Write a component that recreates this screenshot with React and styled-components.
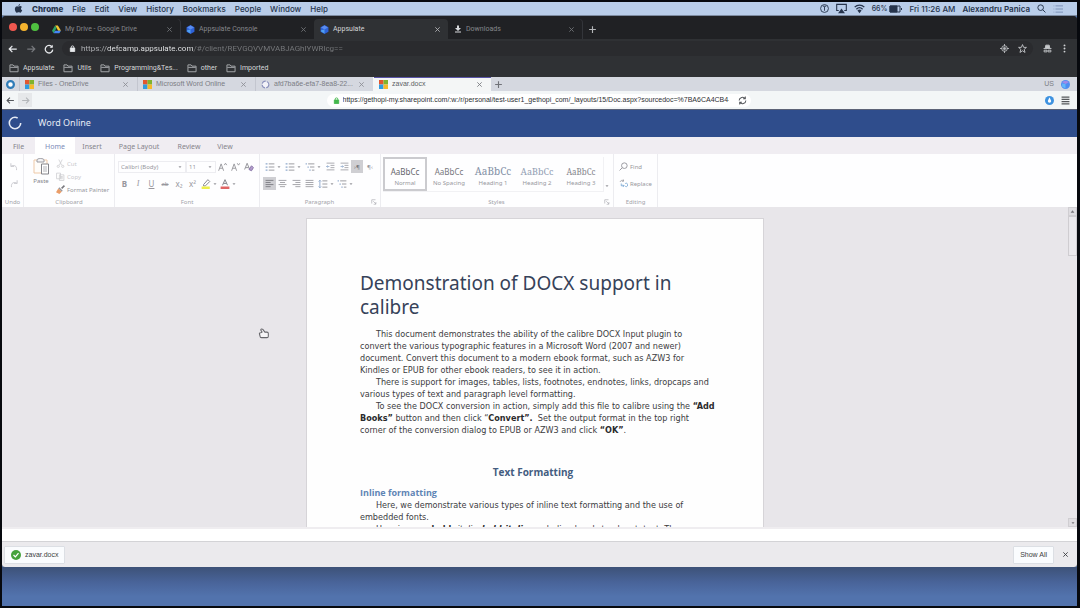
import React from "react";
import styled, { createGlobalStyle, css } from "styled-components";

const ui = `Inter, "Liberation Sans", sans-serif`;
const chrome = `Roboto, "Liberation Sans", sans-serif`;
const arial = `"Liberation Sans", Arial, sans-serif`;
const humanist = `"Noto Sans", "Open Sans", sans-serif`;
const heading = `"Open Sans", "Noto Sans", sans-serif`;
const body = `"DejaVu Sans Condensed", "Open Sans", sans-serif`;

const Global = createGlobalStyle`
  *, *::before, *::after { box-sizing: border-box; }
  body { margin: 0; background: #05070b; font-family: ${ui}; }
  button, input, select { font: inherit; color: inherit; border: 0; padding: 0; margin: 0; background: none; }
  button { display: inline-flex; align-items: center; white-space: nowrap; }
  a { color: inherit; text-decoration: none; }
  h1, h2, h3, p { margin: 0; font-weight: inherit; }
  svg { display: block; flex: none; }
`;

const Screen = styled.div`
  min-height: 100vh;
  display: flex;
  flex-direction: column;
  border: solid #07090e;
  border-width: 2px 3px 2px 2px;
  background: #5273ac;
`;

const Spacer = styled.div`flex: 1;`;

/* ---------- system menu bar ---------- */
const MenuBar = styled.header`
  height: 14px;
  display: flex;
  align-items: center;
  padding: 0 14px 0 12px;
  background: #b9cde9;
  border-bottom: 1px solid #7d8ba0;
  color: #26344c;
  font-size: 8px;
  line-height: 12px;
`;
const MenuItems = styled.nav`
  display: flex;
  align-items: center;
  gap: 9px;
`;
const MenuItem = styled.button`font-weight: ${(p) => (p.$strong ? 800 : 500)};`;
const StatusItems = styled.div`
  display: flex;
  align-items: center;
  gap: 7px;
  white-space: nowrap;
  font-weight: 500;
  b { font-weight: 600; }
`;
const Battery = styled.span`
  display: flex;
  align-items: center;
  gap: 2px;
  font-size: 7px;
`;

/* ---------- outer browser ---------- */
const Window = styled.div`
  flex: 1;
  display: flex;
  flex-direction: column;
  min-height: 0;
  background: #2f3134;
  border-radius: 4px 4px 3px 3px;
  overflow: hidden;
`;
const DarkTabs = styled.div`
  height: 23px;
  display: flex;
  align-items: flex-end;
  background: #202124;
  padding-left: 7px;
`;
const Lights = styled.div`
  display: flex;
  gap: 3px;
  align-self: center;
  padding-bottom: 2px;
  width: 37px;
`;
const Light = styled.button`
  width: 8px;
  height: 8px;
  border-radius: 50%;
  background: ${(p) => p.$color};
`;
const DarkTab = styled.div`
  width: 134px;
  height: 20px;
  display: flex;
  align-items: center;
  padding: 0 7px 0 6px;
  border-radius: 4px 4px 0 0;
  color: #85878b;
  font: 7px/10px ${chrome};
  ${(p) => p.$active && css`background: #2f3134; color: #d4d5d8;`}
  ${(p) => p.$divider && css`box-shadow: 1px 0 0 #33353a;`}
`;
const TabLabel = styled.button`
  flex: 1;
  gap: 4px;
  min-width: 0;
  overflow: hidden;
`;
const Close = styled.button`
  width: 7px;
  height: 9px;
  justify-content: center;
  opacity: 0.8;
`;
const NewTab = styled.button`
  height: 20px;
  margin-left: ${(p) => p.$gap}px;
  color: ${(p) => p.$color};
`;
const DarkBar = styled.div`
  height: 19px;
  display: flex;
  align-items: center;
  padding: 0 8px 0 6px;
  gap: 8px;
  color: #e8eaed;
`;
const DarkNav = styled.button`color: ${(p) => (p.$off ? "#77797d" : "#e8eaed")};`;
const DarkAddress = styled.label`
  flex: 1;
  height: 15px;
  display: flex;
  align-items: center;
  gap: 5px;
  padding: 0 6px 0 7px;
  margin-right: 2px;
  border-radius: 8px;
  background: #2a2b2e;
`;
const AddressActions = styled.span`
  display: flex;
  gap: 9px;
`;
const DarkUrl = styled.input`
  flex: 1;
  min-width: 0;
  height: 13px;
  font: 8px/12px ${chrome};
  color: transparent;
  background: linear-gradient(90deg, #b4b6b9 26px, #eceef0 26px, #eceef0 113px, #77797c 113px);
  background-clip: text;
  -webkit-background-clip: text;
`;
const Bookmarks = styled.nav`
  height: 19px;
  display: flex;
  align-items: center;
  gap: 9px;
  padding: 0 7px;
  color: #d6d8da;
  font: 7px/10px ${chrome};
  a { display: flex; align-items: center; gap: 4px; }
`;

/* ---------- inner browser ---------- */
const LightTabs = styled.div`
  height: 14px;
  display: flex;
  align-items: stretch;
  background: #d5d8e0;
  color: #7b7d84;
  font: 7px/12px ${arial};
  ${NewTab} { height: 14px; }
`;
const Home = styled.button`
  width: 17px;
  justify-content: center;
`;
const LightTab = styled.div`
  width: 118px;
  display: flex;
  align-items: center;
  padding: 0 8px 0 5px;
  border-left: 1px solid #c3c6cf;
  ${(p) => p.$active && css`background: #f4f6f6; border-color: #f4f6f6; box-shadow: inset 0 1px #5a55a8; color: #5c5e64;`}
`;
const Region = styled.div`
  display: flex;
  align-items: center;
  gap: 7px;
  padding-right: 7px;
`;
const LightBar = styled.div`
  height: 18px;
  display: flex;
  align-items: center;
  padding-right: 1px;
  background: #f3f6f7;
  color: #55585c;
`;
const NavButton = styled.button`
  width: ${(p) => (p.$wide ? 14 : 16)}px;
  height: 14px;
  justify-content: center;
  ${(p) => p.$off && css`background: #e6e8ea; color: #b4b7ba;`}
`;
const LightAddress = styled.label`
  width: 424px;
  height: 13px;
  display: flex;
  align-items: center;
  gap: 3px;
  padding: 0 4px 0 6px;
  border-radius: 7px;
  background: #fff;
`;
const LightUrl = styled.input`
  width: 386px;
  height: 12px;
  font: 7px/12px ${arial};
  color: #2d2f33;
`;

/* ---------- word ---------- */
const WordHeader = styled.div`
  height: 28px;
  display: flex;
  align-items: center;
  gap: 16px;
  padding: 0 6px 1px;
  border-top: 1px solid #5c6377;
  background: #2f4d8c;
  color: #e6ebf5;
  font: 9px/12px ${humanist};
`;
const RibbonTabs = styled.nav`
  height: 17px;
  display: flex;
  background: #f0edf2;
  color: #85838b;
  font: 7px/17px ${humanist};
`;
const RibbonTab = styled.button`
  width: ${(p) => p.$w}px;
  justify-content: center;
  padding-top: 1px;
  ${(p) => p.$active && css`background: #fff; color: #7c8cb8;`}
`;
const Ribbon = styled.div`
  height: 53px;
  display: flex;
  background: #fefeff;
  color: #97979d;
  font: 6px/8px ${humanist};
`;
const Group = styled.section`
  width: ${(p) => p.$w}px;
  display: flex;
  flex-direction: column;
  border-right: 1px solid #ececf0;
  padding: 3px 0 1px;
`;
const GroupBody = styled.div`
  flex: 1;
  display: flex;
  flex-direction: ${(p) => (p.$col ? "column" : "row")};
  gap: ${(p) => p.$gap || 0}px;
  padding: ${(p) => p.$pad || "0"};
`;
const GroupName = styled.div`
  display: flex;
  justify-content: center;
  color: #a3a3a9;
  span { flex: 1; text-align: center; }
  svg { margin: 1px 3px 0 -8px; }
`;
const Stack = styled.div`
  display: flex;
  flex-direction: column;
`;
const Row = styled.div`
  display: flex;
  align-items: center;
  height: 13px;
`;
const Tool = styled.button`
  height: 13px;
  gap: 2px;
  justify-content: center;
  ${(p) => p.$w && css`width: ${p.$w}px;`}
  ${(p) => p.$on && css`background: #cfcfd3; color: #77777d;`}
  ${(p) => p.$off && css`color: #c9c9ce;`}
`;
const Letter = styled(Tool)`
  font-size: 8px;
  font-family: ${(p) => (p.$serif ? `"Liberation Serif", serif` : humanist)};
`;
const LabelTool = styled(Tool)`justify-content: flex-start;`;
const Paste = styled.button`
  width: 26px;
  flex-direction: column;
  gap: 1px;
  align-self: flex-start;
  color: #85858b;
`;
const Picker = styled.label`
  width: ${(p) => p.$w}px;
  height: 12px;
  display: flex;
  align-items: center;
  border: 1px solid #ededf1;
  padding: 0 3px 0 2px;
  select { flex: 1; min-width: 0; appearance: none; font-size: 6px; line-height: 10px; }
`;
const Gallery = styled.div`
  flex: 1;
  display: flex;
  border: solid #f1f1f4;
  border-width: 0 1px 1px 0;
`;
const More = styled(Tool)`align-self: flex-end;`;
const StyleCard = styled.button`
  width: 44px;
  height: 34px;
  flex-direction: column;
  justify-content: center;
  overflow: hidden;
  gap: 1px;
  padding-top: 3px;
  border: 2px solid ${(p) => (p.$on ? "#cbcbcf" : "transparent")};
  span { font-size: 6px; line-height: 8px; color: #97979d; }
`;
const Sample = styled.em`
  font: normal ${(p) => p.$size}px/13px ${(p) => (p.$serif ? `"Noto Serif", "Liberation Serif", serif` : humanist)};
  color: ${(p) => p.$color};
`;

const Canvas = styled.main`
  flex: 1 1 0;
  min-height: 0;
  display: flex;
  background: #e8e6ea;
  border-bottom: 2px solid #efedf0;
  position: relative;
`;
const PageArea = styled.div`
  flex: 1;
  display: flex;
  justify-content: center;
  overflow: hidden;
  padding-top: 11px;
`;
const Page = styled.article`
  width: 458px;
  height: max-content;
  padding: 52px 53px 20px;
  border: 1px solid #d6d4d8;
  background: #fefefe;
  color: #3c3c3e;
  font: 9px/12px ${body};
  white-space: nowrap;
  p { text-indent: 16px; }
  p b { color: #2a2a2c; }
`;
const Title = styled.h1`
  color: #364259;
  font: 19px/24px ${humanist};
  margin-bottom: 9px;
`;
const Section = styled.h2`
  color: #435c80;
  font: 700 10px/12px ${heading};
  text-align: center;
  margin: 30px 46px 9px 42px;
`;
const SubSection = styled.h3`
  color: #5f85b5;
  font: 700 9px/12px ${heading};
`;
const Scrollbar = styled.div`
  width: 9px;
  display: flex;
  flex-direction: column;
  justify-content: space-between;
`;
const ScrollButton = styled.button`
  height: 9px;
  justify-content: center;
  background: #dfdde1;
  border: 1px solid #d0ced2;
  color: #77757a;
`;
const Thumb = styled.div`
  height: 40px;
  border: 1px solid #cfcdd1;
  background: #eae8ec;
  margin-bottom: auto;
`;
const Hand = styled.svg`
  position: absolute;
  left: 256px;
  top: 121px;
`;
const Status = styled.div`
  height: 12px;
  background: #fff;
`;
const Downloads = styled.footer`
  height: 26px;
  display: flex;
  align-items: center;
  padding: 0 1px 0 2px;
  border-top: 1px solid #d3d3d6;
  background: #ebeaed;
  color: #3a3c40;
  font: 7px/10px ${arial};
`;
const Chip = styled.button`
  height: 18px;
  gap: 4px;
  padding: 0 6px;
  border: 1px solid #dcdfe4;
  border-radius: 1px;
  background: #fafcfe;
  font: inherit;
`;
const Desktop = styled.div`
  height: 39px;
  background: linear-gradient(#3d5278, #49649a 40%, #5273ad 75%);
`;

/* ---------- icons ---------- */
const S = ({ w = 10, h = w, box = "0 0 16 16", sw = 1.6, children, ...rest }) => (
  <svg width={w} height={h} viewBox={box} fill="none" stroke="currentColor" strokeWidth={sw} aria-hidden="true" {...rest}>{children}</svg>
);
const X = ({ w = 7 }) => <S w={w} sw={2}><path d="M3 3l10 10M13 3L3 13" /></S>;
const Plus = () => <S w={9} sw={2}><path d="M8 2v12M2 8h12" /></S>;
const Arrow = ({ flip, w = 10 }) => <S w={w} sw={2}><path d={flip ? "M2 8h12M9 3l5 5-5 5" : "M14 8H2M7 3L2 8l5 5"} /></S>;
const Reload = ({ w = 10 }) => <S w={w} sw={2}><path d="M13 5a6 6 0 1 0 1 4" /><path d="M14 1v5H9z" fill="currentColor" stroke="none" /></S>;
const Sync = () => <S w={9} sw={1.8}><path d="M2 8a6 6 0 0 1 11-3M14 8a6 6 0 0 1-11 3M13 1v4H9M3 15v-4h4" /></S>;
const Lock = ({ color = "#e8eaed" }) => <S w={7} stroke={color} sw={2}><path d="M5 8V5a3 3 0 0 1 6 0v3" /><path d="M3 7h10v8H3z" fill={color} /></S>;
const Folder = () => <S w={10} stroke="#a9abae" sw={1.5}><path d="M1.500 3h5l1.500 2h6.500v9h-13zM2 7h12" /></S>;
const Apple = () => (
  <S w={9}><path fill="currentColor" stroke="none" d="M10.800 0c.1 1.700-1.200 3.400-2.900 3.500C7.700 1.900 9.200.2 10.800 0zM8 4.500c.8 0 1.700-.8 3.100-.8 1 0 2.200.5 3 1.600-2.500 1.500-2.100 5 .5 6-.6 1.700-2 4.200-3.500 4.200-1.100 0-1.500-.7-2.900-.7s-1.800.7-2.900.7C3.400 15.500 1.500 12 1.500 8.900c0-3.300 2-5.100 4-5.100 1.100 0 1.800.7 2.500.7z" /></S>
);
const Drive = () => (
  <S w={9} stroke="none"><path d="M5.500 1h5L16 10h-5z" fill="#f4c431" /><path d="M5.500 1L8 5.500 3 14.500 0 10z" fill="#2da567" /><path d="M5.500 10H16l-3 4.500H3z" fill="#4486f4" /></S>
);
const Cube = () => (
  <S w={9} stroke="none"><path d="M8 0l7 4v8l-7 4-7-4V4z" fill="#2e62d8" /><path d="M8 1l6 3.500L8 8 2 4.500z" fill="#5b8df0" /><path d="M8 8v7l-6-3.500v-2z" fill="#4fa0f0" /></S>
);
const CloudBadge = () => (
  <S w={9} stroke="none"><circle cx="8" cy="8" r="8" fill="#4f8df0" /><path d="M2 4a8 8 0 0 1 12 0L8 7z" fill="#a08ae8" /><path d="M8 7v8l-6-3V6z" fill="#63b6fa" /></S>
);
const Download = () => <S w={8} stroke="none"><path d="M6 1h4v5h4l-6 6-6-6h4zM2 13h12v2H2z" fill="#d7d9dc" /></S>;
const Microsoft = () => (
  <S w={9} stroke="none"><path d="M0 0h8v8H0z" fill="#e2572f" /><path d="M8 0h8v8H8z" fill="#7fb32d" /><path d="M0 8h8v8H0z" fill="#2f9be0" /><path d="M8 8h8v8H8z" fill="#f5b92a" /></S>
);
const Ring = ({ w = 8, color, inner }) => <S w={w} stroke={color} sw={4}><circle cx="8" cy="8" r="6" fill={inner || "none"} /></S>;
const Loader = () => <S w={9} stroke="#8d93bd" sw={2}><circle cx="8" cy="8" r="6" strokeDasharray="8 2" fill="#f2f2f8" /></S>;
const Caret = () => <S w={4} box="0 0 8 8" stroke="none"><path d="M1 2.500h6L4 6z" fill="currentColor" /></S>;
const Lines = ({ rows = [14, 14, 14, 14], align = "l" }) => (
  <S w={9} sw={1.500}>
    {rows.map((r, i) => {
      const x = align === "l" ? 1 : align === "r" ? 15 - r : 8 - r / 2;
      return <path key={i} d={`M${x} ${2.5 + i * 3.700}h${r}`} />;
    })}
  </S>
);
const List = ({ nested }) => (
  <S w={10} sw={1.500}>
    <path d={nested ? "M5 3h10M8 8h7M11 13h4" : "M6 3h9M6 8h9M6 13h9"} />
    <path stroke="#8fa9cc" strokeWidth="2" d={nested ? "M1 3h2M4 8h2M7 13h2" : "M1 3h3M1 8h3M1 13h3"} />
  </S>
);
const Indent = ({ out }) => (
  <S w={9} sw={1.400}><path d="M1 2h14M8 6h7M8 10h7M1 14h14" /><path stroke="#8fa9cc" d={out ? "M6 8H1M3 6L1 8l2 2" : "M1 8h5M4 6l2 2-2 2"} /></S>
);
const Spacing = () => <S w={10} sw={1.500}><path d="M7 3h8M7 8h8M7 13h8" /><path stroke="#8fa9cc" d="M3 2v12M1 4l2-2 2 2M1 12l2 2 2-2" /></S>;
const Launcher = () => <S w={6}><path d="M2 12V2h10M6 6l7 7M13 8v6H7" /></S>;
const Undo = ({ flip }) => (
  <S w={10} sw={1.500}><path d={flip ? "M13 2v5H8M13 7C8 4 3 6 4 13" : "M3 2v5h5M3 7c5-3 10-1 9 6"} /></S>
);
const Clipboard = () => (
  <svg width="17" height="19" viewBox="0 0 17 19" fill="none" aria-hidden="true">
    <path d="M1 3h13v13H1z" stroke="#eec9a8" fill="#fffdfa" /><path d="M4 3c0-2 7-2 7 0v2H4z" stroke="#9a9aa0" fill="#f3f3f5" />
    <path d="M8.500 7h7v10h-7z" stroke="#85858b" fill="#fff" /><path d="M10 10h4M10 12h4M10 14h4" stroke="#b5b5ba" />
  </svg>
);
const Scissors = () => <S w={9} sw={1.300}><path d="M5 1l5 10M11 1L6 11" /><circle cx="4" cy="13" r="2" /><circle cx="12" cy="13" r="2" /></S>;
const Copy = () => <S w={9} sw={1.300}><path d="M1 2h7v10H1zM6 5h8v10H6z" fill="#fff" /><path d="M8 8h4M8 10h4M8 12h4" /></S>;
const Brush = () => <S w={9} stroke="none"><path d="M9 5l5-5 2 2-5 5z" fill="#77777d" /><path d="M6 4l6 6-2 2-6-6z" fill="#98989e" /><path d="M4 6l6 6-4 4-6-3z" fill="#ea9d68" /></S>;
const Marker = () => <S w={10}><path d="M4 9l7-8 3 3-7 7H4z" stroke="#8a8a90" /><path d="M1 14h13" stroke="#eef04a" strokeWidth="4" /></S>;
const FontColor = () => <S w={10}><path d="M4 10L8 1l4 9M5.500 7h5" stroke="#85858b" /><path d="M1 14h14" stroke="#e06565" strokeWidth="4" /></S>;
const FontSize = ({ up }) => <S w={10} sw={1.500}><path d="M1 14L5 3l4 11M2.500 10h5" /><path d={up ? "M10 5l2-3 2 3" : "M10 2l2 3 2-3"} /></S>;
const Search = ({ w = 9, flip }) => <S w={w} sw={1.700}><g transform={flip ? "matrix(-1 0 0 1 16 0)" : undefined}><circle cx="6.500" cy="6.500" r="5" /><path d="M10 10l5 5" /></g></S>;
const Replace = () => <S w={9} sw={1.400}><path d="M2 5a4 4 0 0 1 6-2M8 1v3H5" /><path stroke="#6b9fd0" d="M4 8v4h5M7 10l2 2-2 2M11 8a3 3 0 1 1 0 5" /></S>;

const darkTabs = [
  { icon: <Drive />, name: "My Drive - Google Drive", divider: true },
  { icon: <Cube />, name: "Appsulate Console" },
  { icon: <Cube />, name: "Appsulate", active: true },
  { icon: <Download />, name: "Downloads", divider: true },
];
const lightTabs = [
  { icon: <Microsoft />, name: "Files - OneDrive" },
  { icon: <Microsoft />, name: "Microsoft Word Online" },
  { icon: <Loader />, name: "afd7ba6e-efa7-8ea8-22..." },
  { icon: <Microsoft />, name: "zavar.docx", active: true },
];
const ribbonTabs = [["File", 33], ["Home", 40], ["Insert", 34], ["Page Layout", 60], ["Review", 40], ["View", 32]];
const styles = [
  ["Normal", 8, false, "#66666c"],
  ["No Spacing", 8, false, "#77777d"],
  ["Heading 1", 10, true, "#8491a6"],
  ["Heading 2", 9, true, "#93a0b4"],
  ["Heading 3", 8, true, "#85858c"],
];

export default function App() {
  return (
    <Screen>
      <Global />
      <MenuBar>
        <MenuItems>
          <MenuItem aria-label="Apple menu"><Apple /></MenuItem>
          <MenuItem $strong>Chrome</MenuItem>
          {["File", "Edit", "View", "History", "Bookmarks", "People", "Window", "Help"].map((m) => <MenuItem key={m}>{m}</MenuItem>)}
        </MenuItems>
        <Spacer />
        <StatusItems>
          <S w={9}><circle cx="8" cy="8" r="7" /><path d="M8 5v7M5 4h6" /></S>
          <S w={11}><path d="M4 11H1V2h14v9h-3" /><path d="M8 8l5 7H3z" fill="currentColor" stroke="none" /></S>
          <S w={11} sw={2}><path d="M1 6c4-4 10-4 14 0M3.500 9c3-3 6-3 9 0" /><path d="M8 15l-3-4c2-2 4-2 6 0z" fill="currentColor" stroke="none" /></S>
          <Battery>66%<S w={13} h={8} box="0 0 13 8" sw={1}><path d="M1 1h10v6H1zM12.500 3v2" /><path d="M1 1h7v6H1z" fill="currentColor" /></S></Battery>
          <span>Fri 11:26 AM</span>
          <b>Alexandru Panica</b>
          <Search />
          <S w={10} stroke="#7d93b8"><path d="M1 3h1M1 8h1M1 13h1M4 3h12M4 8h12M4 13h12" /></S>
        </StatusItems>
      </MenuBar>

      <Window>
        <DarkTabs>
          <Lights>
            <Light $color="#f0584f" aria-label="Close window" />
            <Light $color="#f4b32e" aria-label="Minimise window" />
            <Light $color="#4fc040" aria-label="Zoom window" />
          </Lights>
          {darkTabs.map((t) => (
            <DarkTab key={t.name} $active={t.active} $divider={t.divider}>
              <TabLabel>{t.icon}{t.name}</TabLabel>
              <Close aria-label="Close tab"><X /></Close>
            </DarkTab>
          ))}
          <NewTab $gap={6} $color="#b4b6b9" aria-label="New tab"><Plus /></NewTab>
        </DarkTabs>
        <DarkBar>
          <DarkNav aria-label="Back"><Arrow /></DarkNav>
          <DarkNav $off aria-label="Forward"><Arrow flip /></DarkNav>
          <DarkNav aria-label="Reload"><Reload /></DarkNav>
          <DarkAddress>
            <Lock />
            <DarkUrl aria-label="Address" readOnly value="https://defcamp.appsulate.com/#/client/REVGQVVMVABJAGhIYWRlcg==" />
            <AddressActions>
              <S w={9} stroke="#b9bbbe"><circle cx="8" cy="8" r="5" /><circle cx="8" cy="8" r="2" fill="#b9bbbe" /><path d="M8 0v4M8 12v4M0 8h4M12 8h4" /></S>
              <S w={9} stroke="#c4c6c9"><path d="M8 1l2 5h5l-4 3.500 1.500 5.500L8 12l-4.500 3L5 9.500 1 6h5z" /></S>
            </AddressActions>
          </DarkAddress>
          <S w={9} stroke="#c4c6c9"><path d="M4 7l1-5h6l1 5z" fill="#c4c6c9" /><path d="M1 8h14M2 11h5v3H2zM9 11h5v3H9z" /></S>
          <S w={9} stroke="none"><g fill="#d0d2d4"><circle cx="8" cy="2.500" r="1.700" /><circle cx="8" cy="8" r="1.700" /><circle cx="8" cy="13.500" r="1.700" /></g></S>
        </DarkBar>
        <Bookmarks>
          {["Appsulate", "Utils", "Programming&Tes...", "other", "Imported"].map((b) => <a key={b} href="#bookmark"><Folder />{b}</a>)}
        </Bookmarks>

        <LightTabs>
          <Home aria-label="Home"><Ring color="#2f7cb8" inner="#fff" w={9} /></Home>
          {lightTabs.map((t) => (
            <LightTab key={t.name} $active={t.active}>
              <TabLabel>{t.icon}{t.name}</TabLabel>
              <Close aria-label="Close tab"><X /></Close>
            </LightTab>
          ))}
          <NewTab $gap={3} $color="#707278" aria-label="New tab"><Plus /></NewTab>
          <Spacer />
          <Region>US<CloudBadge /></Region>
        </LightTabs>
        <LightBar>
          <NavButton aria-label="Back"><Arrow w={9} /></NavButton>
          <NavButton $wide $off aria-label="Forward"><Arrow flip w={9} /></NavButton>
          <Spacer />
          <LightAddress>
            <Lock color="#43b74c" />
            <LightUrl aria-label="Page address" readOnly value="https://gethopi-my.sharepoint.com/:w:/r/personal/test-user1_gethopi_com/_layouts/15/Doc.aspx?sourcedoc=%7BA6CA4CB4-4674" />
            <Spacer />
            <Sync />
          </LightAddress>
          <Spacer />
          <S w={9} stroke="none"><circle cx="8" cy="8" r="8" fill="#3d92e0" /><path d="M8 2l3 7a3 3 0 1 1-6 0z" fill="#fff" /></S>
          <Tool $w={22} aria-label="Menu"><S w={9} sw={2}><path d="M1 2h14M1 6h14M1 10h14M1 14h14" /></S></Tool>
        </LightBar>

        <WordHeader>
          <S w={14} sw={1.800}><circle cx="8" cy="8" r="6.500" strokeDasharray="33 8" /></S>
          Word Online
        </WordHeader>
        <RibbonTabs>
          {ribbonTabs.map(([n, w]) => <RibbonTab key={n} $w={w} $active={n === "Home"}>{n}</RibbonTab>)}
        </RibbonTabs>
        <Ribbon>
          <Group $w={22}>
            <GroupBody $col $gap={4} $pad="3px 0 0 6px">
              <Tool $off $w={12} aria-label="Undo"><Undo /></Tool>
              <Tool $off $w={12} aria-label="Redo"><Undo flip /></Tool>
            </GroupBody>
            <GroupName><span>Undo</span></GroupName>
          </Group>
          <Group $w={91}>
            <GroupBody $gap={2} $pad="0 0 0 4px">
              <Paste><Clipboard />Paste</Paste>
              <Stack>
                <LabelTool $off><Scissors />Cut</LabelTool>
                <LabelTool $off><Copy />Copy</LabelTool>
                <LabelTool><Brush />Format Painter</LabelTool>
              </Stack>
            </GroupBody>
            <GroupName><span>Clipboard</span></GroupName>
          </Group>
          <Group $w={145}>
            <GroupBody $col $gap={4} $pad="3px 0 0 3px">
              <Row>
                <Picker $w={68}><select aria-label="Font"><option>Calibri (Body)</option></select><Caret /></Picker>
                <Picker $w={30}><select aria-label="Font size"><option>11</option></select><Caret /></Picker>
                <Tool $w={14} aria-label="Grow font"><FontSize up /></Tool>
                <Tool $w={12} aria-label="Shrink font"><FontSize /></Tool>
                <Tool $w={13} aria-label="Clear formatting"><S w={10}><path d="M1 12L5 2l4 10M2.500 9h5" /><path d="M8 12l4-6 3 3-3 5z" fill="#b49ccd" stroke="#8a78a8" /></S></Tool>
              </Row>
              <Row>
                <Letter $w={13}><b>B</b></Letter>
                <Letter $serif $w={14}><i>I</i></Letter>
                <Letter $w={13}><u>U</u></Letter>
                <Tool $w={14}><s>ab</s></Tool>
                <Letter $w={14}>x₂</Letter>
                <Letter $w={13}>x²</Letter>
                <Tool $w={19} aria-label="Highlight"><Marker /><Caret /></Tool>
                <Tool $w={19} aria-label="Font colour"><FontColor /><Caret /></Tool>
              </Row>
            </GroupBody>
            <GroupName><span>Font</span></GroupName>
          </Group>
          <Group $w={121}>
            <GroupBody $col $gap={4} $pad="3px 0 0 3px">
              <Row>
                <Tool $w={20} aria-label="Bullets"><List /><Caret /></Tool>
                <Tool $w={20} aria-label="Numbering"><List /><Caret /></Tool>
                <Tool $w={20} aria-label="Multilevel list"><List nested /><Caret /></Tool>
                <Tool $w={14} aria-label="Decrease indent"><Indent out /></Tool>
                <Tool $w={14} aria-label="Increase indent"><Indent /></Tool>
                <Tool $w={12} $on>›¶</Tool>
                <Tool $w={14}>¶‹</Tool>
              </Row>
              <Row>
                <Tool $w={13} $on aria-label="Align left"><Lines rows={[14, 9, 14, 9]} /></Tool>
                <Tool $w={13} aria-label="Centre"><Lines rows={[14, 9, 14, 9]} align="c" /></Tool>
                <Tool $w={14} aria-label="Align right"><Lines rows={[14, 9, 14, 9]} align="r" /></Tool>
                <Tool $w={13} aria-label="Justify"><Lines /></Tool>
                <Tool $w={19} aria-label="Line spacing"><Spacing /><Caret /></Tool>
                <Tool $w={20} aria-label="Paragraph spacing"><List nested /><Caret /></Tool>
              </Row>
            </GroupBody>
            <GroupName><span>Paragraph</span><Launcher /></GroupName>
          </Group>
          <Group $w={233}>
            <GroupBody $pad="0 3px 6px 2px">
              <Gallery>
                {styles.map(([n, size, serif, color]) => (
                  <StyleCard key={n} $on={n === "Normal"}>
                    <Sample $size={size} $serif={serif} $color={color}>AaBbCc</Sample><span>{n}</span>
                  </StyleCard>
                ))}
              </Gallery>
              <More $w={8} aria-label="More styles"><Caret /></More>
            </GroupBody>
            <GroupName><span>Styles</span><Launcher /></GroupName>
          </Group>
          <Group $w={44}>
            <GroupBody $col $gap={4} $pad="3px 0 0 5px">
              <Row><Tool><Search flip />Find</Tool></Row>
              <Row><Tool><Replace />Replace</Tool></Row>
            </GroupBody>
            <GroupName><span>Editing</span></GroupName>
          </Group>
        </Ribbon>

        <Canvas>
          <PageArea>
            <Page>
              <Title>Demonstration of DOCX support in<br />calibre</Title>
              <p>This document demonstrates the ability of the calibre DOCX Input plugin to<br />convert the various typographic features in a Microsoft Word (2007 and newer)<br />document. Convert this document to a modern ebook format, such as AZW3 for<br />Kindles or EPUB for other ebook readers, to see it in action.</p>
              <p>There is support for images, tables, lists, footnotes, endnotes, links, dropcaps and<br />various types of text and paragraph level formatting.</p>
              <p>To see the DOCX conversion in action, simply add this file to calibre using the <b>“Add<br />Books”</b> button and then click “<b>Convert”.</b>&nbsp; Set the output format in the top right<br />corner of the conversion dialog to EPUB or AZW3 and click <b>“OK”</b>.</p>
              <Section>Text Formatting</Section>
              <SubSection>Inline formatting</SubSection>
              <p>Here, we demonstrate various types of inline text formatting and the use of<br />embedded fonts.</p>
              <p>Here is some <b>bold, </b><i>italic, </i><b><i>bold-italic, </i></b><u>underlined</u> and <s>struck out</s>&nbsp; text. Then, we</p>
            </Page>
          </PageArea>
          <Scrollbar>
            <ScrollButton aria-label="Scroll up"><S w={5} box="0 0 8 8" stroke="none"><path d="M1 6h6L4 2z" fill="currentColor" /></S></ScrollButton>
            <Thumb />
            <ScrollButton aria-label="Scroll down"><Caret /></ScrollButton>
          </Scrollbar>
          <Hand width="11" height="11" viewBox="0 0 16 16" fill="#f6f5f7" stroke="#66666b" strokeWidth="1.500" strokeLinejoin="round" aria-hidden="true">
            <path d="M2 8c0-1 1-1 2-1l2-1-2-3c0-2 2-2 3-1l3 4h3c1 0 2 1 2 2v4c0 1-1 2-2 2H5c-1 0-2-1-2-2z" />
          </Hand>
        </Canvas>
        <Status />
        <Downloads>
          <Chip>
            <S w={10} stroke="none"><circle cx="8" cy="8" r="8" fill="#46a23c" /><path d="M4 8l3 3 5-6" stroke="#fff" strokeWidth="2" /></S>
            zavar.docx
          </Chip>
          <Spacer />
          <Chip>Show All</Chip>
          <Tool $w={22} aria-label="Close downloads"><X /></Tool>
        </Downloads>
      </Window>
      <Desktop />
    </Screen>
  );
}
